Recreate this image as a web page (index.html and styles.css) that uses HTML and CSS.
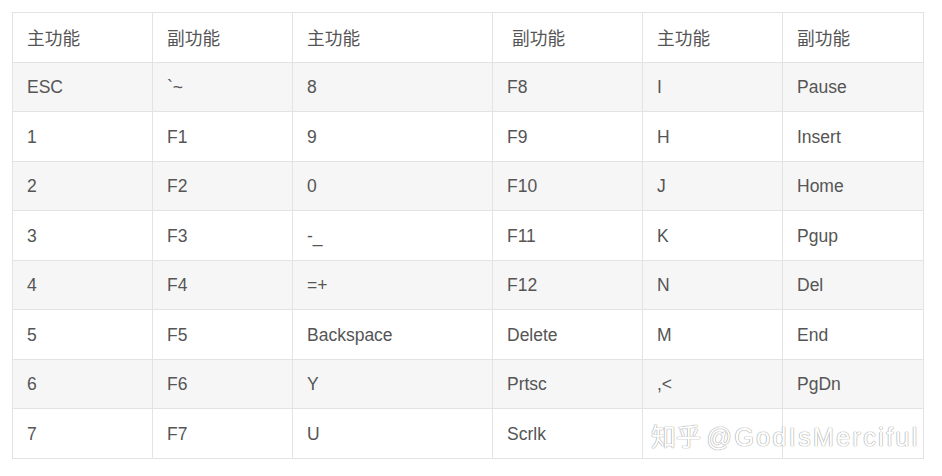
FILE: index.html
```html
<!DOCTYPE html>
<html lang="zh">
<head>
<meta charset="utf-8">
<title>键位表</title>
<link rel="stylesheet" href="styles.css">
</head>
<body>
<div class="wrap">
<table class="keys">
<colgroup>
<col class="c1"><col class="c2"><col class="c3"><col class="c4"><col class="c5"><col class="c6">
</colgroup>
<thead>
<tr><th>主功能</th><th>副功能</th><th>主功能</th><th class="shift">副功能</th><th>主功能</th><th>副功能</th></tr>
</thead>
<tbody>
<tr><td>ESC</td><td>`~</td><td>8</td><td>F8</td><td>I</td><td>Pause</td></tr>
<tr><td>1</td><td>F1</td><td>9</td><td>F9</td><td>H</td><td>Insert</td></tr>
<tr><td>2</td><td>F2</td><td>0</td><td>F10</td><td>J</td><td>Home</td></tr>
<tr><td>3</td><td>F3</td><td>-_</td><td>F11</td><td>K</td><td>Pgup</td></tr>
<tr><td>4</td><td>F4</td><td>=+</td><td>F12</td><td>N</td><td>Del</td></tr>
<tr><td>5</td><td>F5</td><td>Backspace</td><td>Delete</td><td>M</td><td>End</td></tr>
<tr><td>6</td><td>F6</td><td>Y</td><td>Prtsc</td><td>,&lt;</td><td>PgDn</td></tr>
<tr><td>7</td><td>F7</td><td>U</td><td>Scrlk</td><td></td><td></td></tr>
</tbody>
</table>
<div class="mark">知乎 <span class="handle">@GodIsMerciful</span></div>
</div>
</body>
</html>
```
FILE: styles.css
```css
html, body {
  margin: 0;
  padding: 0;
  background: #ffffff;
}
body {
  font-family: "Liberation Sans", Arial, "Noto Sans CJK SC", sans-serif;
}
.wrap {
  position: relative;
  padding: 12px 0 0 12px;
  width: 911px;
}
.keys {
  border-collapse: collapse;
  table-layout: fixed;
  width: 911px;
  color: #555555;
  font-size: 17.5px;
}
.c1 { width: 140px; }
.c2 { width: 140px; }
.c3 { width: 200px; }
.c4 { width: 150px; }
.c5 { width: 140px; }
.c6 { width: 141px; }
.keys th,
.keys td {
  border: 1px solid #e3e3e3;
  height: 49.5px;
  padding: 0 0 0 14px;
  text-align: left;
  vertical-align: middle;
  white-space: nowrap;
  box-sizing: border-box;
}
.keys td {
  padding-top: 2px;
}
.keys th {
  font-family: "Noto Sans CJK SC", "Liberation Sans", sans-serif;
  font-weight: normal;
  font-size: 17.7px;
  background: #ffffff;
}
.keys th.shift {
  padding-left: 19px;
}
.keys tbody tr:nth-child(odd) td {
  background: #f6f6f6;
}
.keys tbody tr:nth-child(even) td {
  background: #ffffff;
}
.mark {
  position: absolute;
  left: 651px;
  top: 417px;
  font-family: "Noto Sans CJK SC", sans-serif;
  font-size: 25px;
  line-height: 36px;
  color: #ffffff;
  text-shadow: 0 0 1px #a8a8a8, 0 0 1px #a8a8a8, 0 0 1px #a8a8a8;
  white-space: nowrap;
}
.mark .handle {
  font-family: "Liberation Sans", sans-serif;
  letter-spacing: 2.4px;
}
```
